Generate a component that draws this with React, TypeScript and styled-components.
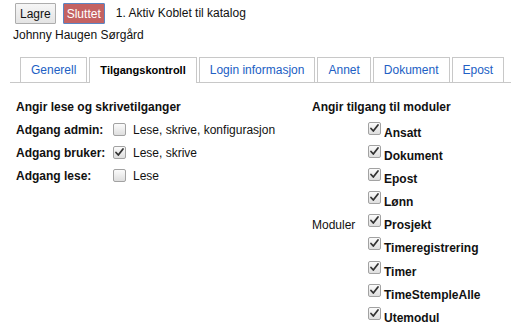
import React from 'react';
import styled, { createGlobalStyle } from 'styled-components';

const GlobalStyle = createGlobalStyle`
  body {
    margin: 0;
    background: #fff;
    font-family: "Liberation Sans", Arial, sans-serif;
    font-size: 12px;
    color: #111;
  }
`;

const tabs = ['Generell', 'Tilgangskontroll', 'Login informasjon', 'Annet', 'Dokument', 'Epost'];

const accessRows = [
  { label: 'Adgang admin:', text: 'Lese, skrive, konfigurasjon', checked: false },
  { label: 'Adgang bruker:', text: 'Lese, skrive', checked: true },
  { label: 'Adgang lese:', text: 'Lese', checked: false },
];

const modules = [
  'Ansatt',
  'Dokument',
  'Epost',
  'Lønn',
  'Prosjekt',
  'Timeregistrering',
  'Timer',
  'TimeStempleAlle',
  'Utemodul',
];

const Check = ({ checked }: { checked: boolean }) => (
  <CheckBox>
    {checked && (
      <svg width="11" height="11" viewBox="0 0 11 11">
        <path d="M2 5.5 L4.3 8 L9 2" fill="none" stroke="#333" strokeWidth="1.8" strokeLinecap="round" strokeLinejoin="round" />
      </svg>
    )}
  </CheckBox>
);

export default function App() {
  return (
    <Page>
      <GlobalStyle />
      <TopBar>
        <Button>Lagre</Button>
        <Button $danger>Sluttet</Button>
        <Status>1. Aktiv Koblet til katalog</Status>
      </TopBar>
      <Name>Johnny Haugen Sørgård</Name>
      <TabBar>
        {tabs.map((t) => (
          <Tab key={t} $active={t === 'Tilgangskontroll'}>{t}</Tab>
        ))}
      </TabBar>
      <Content>
        <LeftColumn>
          <Heading>Angir lese og skrivetilganger</Heading>
          {accessRows.map((r) => (
            <AccessRow key={r.label}>
              <RowLabel>{r.label}</RowLabel>
              <Check checked={r.checked} />
              <span>{r.text}</span>
            </AccessRow>
          ))}
        </LeftColumn>
        <RightColumn>
          <Heading>Angir tilgang til moduler</Heading>
          <ModuleBlock>
            <ModuleLabel>Moduler</ModuleLabel>
            <ModuleList>
              {modules.map((m) => (
                <ModuleRow key={m}>
                  <Check checked />
                  <ModuleName>{m}</ModuleName>
                </ModuleRow>
              ))}
            </ModuleList>
          </ModuleBlock>
        </RightColumn>
      </Content>
    </Page>
  );
}

const Page = styled.div`
  width: 511px;
  height: 336px;
  padding-top: 3px;
  box-sizing: border-box;
  overflow: hidden;
`;

const TopBar = styled.div`
  display: flex;
  align-items: center;
  gap: 7px;
  padding-left: 15px;
`;

const Button = styled.button<{ $danger?: boolean }>`
  height: 21px;
  padding: 0 ${(p) => (p.$danger ? '3px' : '4px')};
  font-family: inherit;
  font-size: 12px;
  border-radius: 1px;
  border: 1px solid ${(p) => (p.$danger ? '#5b86c4' : '#adadad')};
  background: ${(p) => (p.$danger ? '#c46262' : 'linear-gradient(#f6f6f6, #e4e4e4)')};
  color: ${(p) => (p.$danger ? '#fff' : '#111')};
`;

const Status = styled.span`
  margin-left: 4px;
  padding-bottom: 2px;
`;

const Name = styled.div`
  padding-left: 13px;
  margin-top: 3px;
  line-height: 16px;
`;

const TabBar = styled.div`
  display: flex;
  gap: 2px;
  margin: 14px 0 0 10px;
  padding-left: 10px;
  border-bottom: 1px solid #c8c8c8;
  height: 25px;
`;

const Tab = styled.div<{ $active?: boolean }>`
  height: ${(p) => (p.$active ? '25px' : '24px')};
  line-height: 24px;
  padding: 0 10px;
  border: 1px solid #c8c8c8;
  border-bottom: none;
  background: #fff;
  color: ${(p) => (p.$active ? '#000' : '#2160c4')};
  font-weight: ${(p) => (p.$active ? 700 : 400)};
  font-size: ${(p) => (p.$active ? '11px' : '12px')};
  white-space: nowrap;
`;

const Content = styled.div`
  display: flex;
  padding-top: 15px;
`;

const LeftColumn = styled.div`
  width: 312px;
  padding-left: 16px;
  box-sizing: border-box;
`;

const RightColumn = styled.div`
  flex: 1;
`;

const Heading = styled.div`
  font-weight: 700;
  line-height: 18px;
  margin-bottom: 2px;
`;

const AccessRow = styled.div`
  display: flex;
  align-items: center;
  height: 23px;
  gap: 7px;
`;

const RowLabel = styled.span`
  width: 90px;
  font-weight: 700;
`;

const CheckBox = styled.span`
  display: inline-flex;
  align-items: center;
  justify-content: center;
  width: 11px;
  height: 11px;
  border: 1px solid #a2a2a2;
  border-radius: 2px;
  background: linear-gradient(#fbfbfb, #dedede);
  flex: none;
`;

const ModuleBlock = styled.div`
  display: flex;
  align-items: center;
  margin-top: 5px;
`;

const ModuleLabel = styled.span`
  width: 56px;
`;

const ModuleList = styled.div`
  display: flex;
  flex-direction: column;
`;

const ModuleRow = styled.div`
  display: flex;
  align-items: flex-start;
  gap: 3px;
  height: 23.1px;
  padding-top: 1px;
  box-sizing: border-box;
`;

const ModuleName = styled.span`
  font-weight: 700;
  font-size: 12px;
  margin-top: 4px;
`;
